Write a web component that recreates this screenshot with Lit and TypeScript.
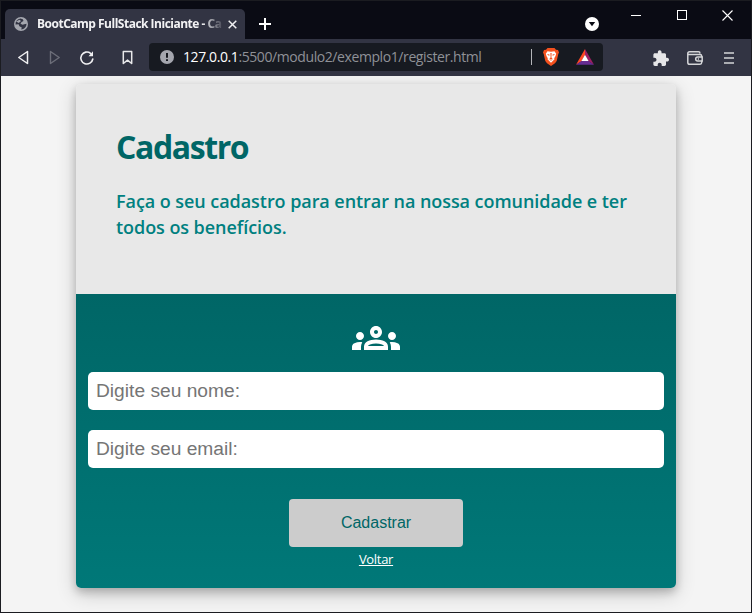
import { LitElement, html, css } from "lit";
import { customElement } from "lit/decorators.js";

@customElement("browser-chrome")
class BrowserChrome extends LitElement {
  static styles = css`
    :host { display: block; font-family: "Open Sans", "Noto Sans", sans-serif; }
    svg { display: block; flex: none; }
    .strip { display: flex; height: 38px; background: #0a0b14; padding-left: 4px; }
    .tab {
      box-sizing: border-box; display: flex; align-items: center; width: 240px; height: 30px;
      margin-top: 8px; padding: 0 8px 0 9px; border-radius: 5px 5px 0 0; background: #323443;
    }
    .title {
      flex: 1; margin: 0 5px 0 9px; white-space: nowrap; line-height: 20px;
      font-size: 12px; font-weight: 700; letter-spacing: -0.5px; color: #f2f2f4;
      -webkit-mask-image: linear-gradient(90deg, #000 165px, transparent 188px);
      mask-image: linear-gradient(90deg, #000 165px, transparent 188px);
    }
    .plus { margin: 17px 0 0 14px; }
    .spacer { flex: 1; }
    .drop { margin: 16px 32px 0 0; }
    .min { margin: 14px 36px 0 0; }
    .max { margin: 9px 35px 0 0; }
    .quit { margin: 9px 18px 0 0; }
    .bar { display: flex; align-items: center; height: 37px; background: #323443; padding-left: 16px; }
    .back { margin-right: 20px; }
    .fwd { margin-right: 18px; }
    .reload { margin-right: 27px; }
    .mark { margin-right: 16px; }
    .address {
      box-sizing: border-box; display: flex; align-items: center; width: 454px; height: 28px;
      padding: 0 9px 0 11px; border-radius: 4px; background: #171a21; margin-bottom: 2px;
    }
    .url {
      flex: 1; margin-left: 9px; white-space: nowrap; line-height: 20px; font-size: 14px;
      letter-spacing: -0.41px; color: #8f9197;
    }
    .host { color: #fff; }
    .sep { width: 1px; height: 16px; margin-right: 11px; background: #b4b5b9; }
    .brave { margin-right: 17px; }
    .puzzle { margin-right: 18px; }
    .wallet { margin-right: 21px; }
    .menu { margin-right: 17px; }
  `;

  render() {
    return html`
      <div class="strip">
        <div class="tab">
          <svg width="14" height="14" viewBox="0 0 14 14">
            <circle cx="7" cy="7" r="7" fill="#a4a6ae" />
            <path d="M6.400 1.500 8.800 2.200 9.500 4 7.600 5 6.500 6.700 8.600 7.700 10.200 7.200 12.500 6.800C12.500 10 10 12.500 7.200 12.500L7.800 10.400 5.400 9.300 4.600 7.200 1.500 7.400C1.400 4.500 3.300 2.200 6.400 1.500z" fill="#323443" />
            <path d="M2 4.500 4.800 5.900 7 4.100 5.500 2.700z" fill="#a4a6ae" />
          </svg>
          <div class="title">BootCamp FullStack Iniciante - Ca</div>
          <svg width="9" height="9" viewBox="0 0 9 9"><path d="M.7.7 8.300 8.300M8.300.7.7 8.300" stroke="#f0f0f2" stroke-width="1.500" /></svg>
        </div>
        <svg class="plus" width="12" height="12" viewBox="0 0 12 12"><path d="M6 0V12M0 6H12" stroke="#fff" stroke-width="2" /></svg>
        <div class="spacer"></div>
        <svg class="drop" width="14" height="14" viewBox="0 0 14 14"><circle cx="7" cy="7" r="7" fill="#fff" /><path d="M3.800 5h6.400L7 9.300z" fill="#0a0b14" /></svg>
        <svg class="min" width="10" height="1"><rect width="10" height="1" fill="#fff" /></svg>
        <svg class="max" width="10" height="10"><rect x=".5" y=".5" width="9" height="9" fill="none" stroke="#fff" /></svg>
        <svg class="quit" width="11" height="11" viewBox="0 0 11 11"><path d="M.5.5l10 10M10.500.5l-10 10" stroke="#fff" stroke-width="1.100" /></svg>
      </div>
      <div class="bar">
        <svg class="back" width="12" height="15" viewBox="0 0 12 15"><path d="M10.500 1.500V13.500L1.800 7.500z" fill="none" stroke="#f0f0f2" stroke-width="1.500" stroke-linejoin="round" /></svg>
        <svg class="fwd" width="12" height="15" viewBox="0 0 12 15"><path d="M1.500 1.500V13.500L10.200 7.500z" fill="none" stroke="#6c6e79" stroke-width="1.400" stroke-linejoin="round" /></svg>
        <svg class="reload" width="16" height="16" viewBox="0 0 16 16">
          <path d="M13.800 9A6 6 0 1 1 11.600 3.300" fill="none" stroke="#f0f0f2" stroke-width="1.600" stroke-linecap="round" />
          <path d="M14 1.300V6.200H9.500z" fill="#f0f0f2" />
        </svg>
        <svg class="mark" width="11" height="15" viewBox="0 0 11 15"><path d="M1.300 1.500H9.700V13.500L5.500 10.100 1.300 13.500z" fill="none" stroke="#e8e8ea" stroke-width="1.500" stroke-linejoin="round" /></svg>
        <div class="address">
          <svg width="14" height="14" viewBox="0 0 14 14"><circle cx="7" cy="7" r="7" fill="#a4a6ae" /><path d="M6 3H8V7.800H6zM6 9.200H8V11.100H6z" fill="#171a21" /></svg>
          <div class="url"><span class="host">127.0.0.1</span>:5500/modulo2/exemplo1/register.html</div>
          <div class="sep"></div>
          <svg class="brave" width="16" height="18" viewBox="0 0 16 18">
            <path d="M4.500 0H11.500L13 1.700 15 2 16 4.500 15.300 6 13.700 13 12 15.200 8 18 4 15.200 2.300 13 .7 6 0 4.500 1 2 3 1.700z" fill="#f4511e" />
            <path d="M4.500 3.200 8 3.700 11.500 3.200 13.200 5.700 12.400 8.200 11.200 10.300 11.500 11.300 8 14.700 4.500 11.300 4.800 10.300 3.600 8.200 2.800 5.700z" fill="#fff" />
            <path d="M3.800 6 6.500 6.600 6.200 8zM12.200 6 9.500 6.600 9.800 8zM7.400 5H8.600L8.400 9.500 9.600 10.500 8 11.700 6.400 10.500 7.600 9.500zM5 10.500 8 12.800 11 10.500 8 12.200z" fill="#f4511e" />
          </svg>
          <svg width="18" height="16" viewBox="0 0 18 16">
            <path d="M9 0V6L5.500 12.200 0 15.700z" fill="#ff4724" /><path d="M9 0 18 15.700 12.500 12.200 9 6z" fill="#9e1f63" />
            <path d="M0 15.700 5.500 12H12.500L18 15.700z" fill="#662d91" /><path d="M9 5.800 12.600 12H5.400z" fill="#fff" />
          </svg>
        </div>
        <div class="spacer"></div>
        <svg class="puzzle" width="16" height="16" viewBox="1.500 0.500 21.500 21.500">
          <path fill="#e6e6e8" d="M20.500 11H19V7c0-1.100-.9-2-2-2h-4V3.500C13 2.120 11.880 1 10.500 1S8 2.120 8 3.500V5H4c-1.100 0-1.990.9-1.990 2v3.800H3.500c1.490 0 2.700 1.210 2.700 2.700s-1.210 2.700-2.700 2.700H2V20c0 1.100.9 2 2 2h3.800v-1.500c0-1.490 1.210-2.700 2.700-2.700 1.490 0 2.700 1.210 2.700 2.700V22H17c1.100 0 2-.9 2-2v-4h1.500c1.380 0 2.500-1.120 2.500-2.500S21.880 11 20.500 11z" />
        </svg>
        <svg class="wallet" width="16" height="14" viewBox="0 0 16 14" fill="none" stroke="#d4d5d8" stroke-width="1.500">
          <path d="M14.700 9.800V11.500Q14.700 13.200 13 13.200H2.600Q.8 13.200.8 11.400V2.600Q.8.8 2.600.8H11.500Q13 .8 13 2.500M1 3.400H13Q14.700 3.400 14.700 5V6" />
          <path d="M15.200 5.900H10.700Q8.700 5.900 8.700 7.900T10.700 9.900H15.200zM10.800 7.900H12" />
        </svg>
        <svg class="menu" width="10" height="12" viewBox="0 0 10 12"><path d="M0 1H10M0 6H10M0 11H10" stroke="#d4d5d8" stroke-width="1.700" /></svg>
      </div>
    `;
  }
}

@customElement("register-card")
class RegisterCard extends LitElement {
  static styles = css`
    :host {
      display: block; width: 600px; height: 504px; border-radius: 5px; overflow: hidden;
      box-shadow: 0 4px 8px rgba(0, 0, 0, 0.2), 0 6px 20px rgba(0, 0, 0, 0.19);
      font-family: "Open Sans", "Noto Sans", sans-serif;
    }
    .intro { box-sizing: border-box; height: 210px; padding: 42px 40px 0; background: #e8e8e8; }
    h1 { margin: 0; font-size: 32px; line-height: 42px; font-weight: 700; letter-spacing: -1.4px; color: #006666; }
    p { margin: 20px 0 0; font-size: 18px; line-height: 26px; font-weight: 600; white-space: nowrap; letter-spacing: -0.06px; color: #008080; }
    .form {
      box-sizing: border-box; display: flex; flex-direction: column; align-items: center;
      height: 294px; padding: 20px 12px 0; background: linear-gradient(#006666, #007878);
    }
    svg { display: block; }
    input {
      box-sizing: border-box; width: 576px; height: 38px; margin: 10px 0; padding: 0 8px;
      border: 0; border-radius: 5px; background: #fff; font: 19.2px "Liberation Sans", Arial, sans-serif;
    }
    input::placeholder { color: #757575; opacity: 1; }
    button {
      width: 174px; height: 48px; margin-top: 21px; padding: 0; border: 0; border-radius: 4px;
      background: #ccc; color: #006666; font: 16px "Liberation Sans", Arial, sans-serif;
    }
    a { margin-top: 3px; font-size: 13px; line-height: 18px; letter-spacing: -0.3px; color: #fff; text-decoration: underline; }
  `;

  render() {
    return html`
      <div class="intro">
        <h1>Cadastro</h1>
        <p>Faça o seu cadastro para entrar na nossa comunidade e ter<br />todos os benefícios.</p>
      </div>
      <div class="form">
        <svg width="48" height="48" viewBox="0 0 24 24" fill="#fff">
          <path d="M4 13c1.100 0 2-.9 2-2s-.9-2-2-2-2 .9-2 2 .9 2 2 2zm1.130 1.100c-.37-.06-.74-.1-1.130-.1-.99 0-1.930.21-2.780.58C.48 14.900 0 15.620 0 16.430V18h4.500v-1.610c0-.83.23-1.610.63-2.290zM20 13c1.100 0 2-.9 2-2s-.9-2-2-2-2 .9-2 2 .9 2 2 2zm4 3.430c0-.81-.48-1.530-1.220-1.850-.85-.37-1.790-.58-2.780-.58-.39 0-.76.04-1.130.1.4.68.63 1.460.63 2.290V18H24v-1.570zm-7.760-2.780c-1.170-.52-2.610-.9-4.240-.9-1.630 0-3.070.39-4.240.9C6.680 14.130 6 15.210 6 16.390V18h12v-1.610c0-1.180-.68-2.260-1.760-2.740zM8.070 16c.09-.23.13-.39.91-.69.97-.38 1.990-.56 3.020-.56s2.050.18 3.020.56c.77.3.81.46.91.69H8.070zM12 8c.55 0 1 .45 1 1s-.45 1-1 1-1-.45-1-1 .45-1 1-1m0-2c-1.660 0-3 1.340-3 3s1.340 3 3 3 3-1.340 3-3-1.340-3-3-3z" />
        </svg>
        <input type="text" placeholder="Digite seu nome:" />
        <input type="email" placeholder="Digite seu email:" />
        <button>Cadastrar</button>
        <a href="#">Voltar</a>
      </div>
    `;
  }
}

@customElement("app-root")
class AppRoot extends LitElement {
  static styles = css`
    :host {
      box-sizing: border-box; display: block; width: 752px; height: 613px;
      border: 1px solid #1b1c21; background: #f4f4f4; overflow: hidden;
    }
    .page { display: flex; justify-content: center; height: 536px; padding-top: 8px; box-sizing: border-box; overflow: hidden; }
  `;

  render() {
    return html`
      <browser-chrome></browser-chrome>
      <div class="page"><register-card></register-card></div>
    `;
  }
}
